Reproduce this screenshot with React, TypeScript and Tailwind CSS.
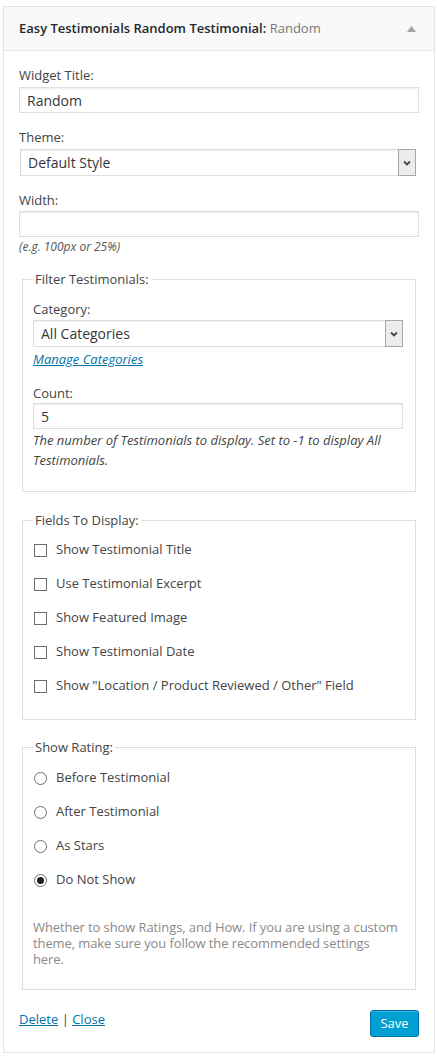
const font = { fontFamily: '"Open Sans", "Liberation Sans", sans-serif' };

function Select({ value }: { value: string }) {
  return (
    <div className="flex h-[27px] border border-[#dddddd] bg-white shadow-[inset_0_1px_2px_rgba(0,0,0,0.07)]">
      <div className="flex-1 flex items-center pl-[7px] text-[14px] text-[#32373c]">{value}</div>
      <div className="w-[18px] -my-px -mr-px flex items-center justify-center border border-[#a6a6a6] bg-[#ececec]">
        <svg width="8" height="6" viewBox="0 0 8 6">
          <path d="M1 1.5 L4 4.5 L7 1.5" fill="none" stroke="#444" strokeWidth="1.8" />
        </svg>
      </div>
    </div>
  );
}

function Input({ value }: { value?: string }) {
  return (
    <div className="h-[26px] flex items-center pl-[7px] border border-[#dddddd] bg-white shadow-[inset_0_1px_2px_rgba(0,0,0,0.07)] text-[14px] text-[#32373c]">
      {value}
    </div>
  );
}

function Label({ children }: { children: React.ReactNode }) {
  return <div className="text-[13px] leading-[18px] text-[#444]">{children}</div>;
}

function Checkbox({ label }: { label: string }) {
  return (
    <div className="h-[34px] flex items-center">
      <span className="w-[13px] h-[13px] border border-[#6d6d6d] bg-white" />
      <span className="ml-[9px] text-[13px] text-[#444]">{label}</span>
    </div>
  );
}

function Radio({ label, checked }: { label: string; checked?: boolean }) {
  return (
    <div className="h-[34px] flex items-center">
      <span className="w-[13px] h-[13px] rounded-full border border-[#6d6d6d] bg-white flex items-center justify-center">
        {checked && <span className="w-[7px] h-[7px] rounded-full bg-[#1e1e1e]" />}
      </span>
      <span className="ml-[9px] text-[13px] text-[#444]">{label}</span>
    </div>
  );
}

export default function App() {
  return (
    <div className="bg-white min-h-[1059px] pt-[6px] pl-[3px]" style={font}>
      <div className="w-[432px] border border-[#e5e5e5] bg-white">
        <div className="h-[44px] flex items-center justify-between pl-[15px] pr-[18px] bg-[#f9f9f9] border-b border-[#e5e5e5]">
          <div className="text-[13px] font-semibold text-[#23282d]">
            Easy Testimonials Random Testimonial:<span className="font-normal text-[#777]"> Random</span>
          </div>
          <svg width="9" height="6" viewBox="0 0 9 6">
            <path d="M0 6 L4.5 0 L9 6 Z" fill="#a0a5aa" />
          </svg>
        </div>

        <div className="px-[15px] pt-[15px] pb-[15px]">
          <Label>Widget Title:</Label>
          <div className="mt-[3px]">
            <Input value="Random" />
          </div>

          <div className="mt-[15px]">
            <Label>Theme:</Label>
          </div>
          <div className="mt-[3px] ml-[1px] mr-[3px]">
            <Select value="Default Style" />
          </div>

          <div className="mt-[15px]">
            <Label>Width:</Label>
          </div>
          <div className="mt-[2px]">
            <Input />
          </div>
          <div className="text-[12px] leading-[18px] italic text-[#555] mt-[1px]">(e.g. 100px or 25%)</div>

          <fieldset className="mt-[14px] mx-[3px] border border-[#dddddd] pl-[10px] pr-[12px] pb-[21px]">
            <legend className="px-[2px] text-[13px] leading-[18px] text-[#444]">Filter Testimonials:</legend>
            <div className="pt-[12px]">
              <Label>Category:</Label>
            </div>
            <div className="mt-[2px]">
              <Select value="All Categories" />
            </div>
            <div className="mt-[3px] text-[13px] leading-[18px] italic text-[#0073aa] underline">Manage Categories</div>
            <div className="mt-[16px]">
              <Label>Count:</Label>
            </div>
            <div className="mt-[1px]">
              <Input value="5" />
            </div>
            <div className="text-[13px] leading-[20px] italic text-[#444] mt-px">
              The number of Testimonials to display. Set to -1 to display All Testimonials.
            </div>
          </fieldset>

          <fieldset className="mt-[19px] mx-[3px] border border-[#dddddd] pl-[11px] pr-[12px] pb-[16px]">
            <legend className="ml-[-1px] px-[2px] text-[13px] leading-[18px] text-[#444]">Fields To Display:</legend>
            <div className="pt-[4px]">
              <Checkbox label="Show Testimonial Title" />
              <Checkbox label="Use Testimonial Excerpt" />
              <Checkbox label="Show Featured Image" />
              <Checkbox label="Show Testimonial Date" />
              <Checkbox label={'Show "Location / Product Reviewed / Other" Field'} />
            </div>
          </fieldset>

          <fieldset className="mt-[18px] mx-[3px] border border-[#dddddd] pl-[11px] pr-[3px] pb-[22px]">
            <legend className="ml-[-1px] px-[2px] text-[13px] leading-[18px] text-[#444]">Show Rating:</legend>
            <div className="pt-[5px]">
              <Radio label="Before Testimonial" />
              <Radio label="After Testimonial" />
              <Radio label="As Stars" />
              <Radio label="Do Not Show" checked />
            </div>
            <div className="mt-[22px] ml-[-1px] w-[367px] text-[13px] leading-[16px] tracking-[-0.1px] text-[#8a8a8a]">
              Whether to show Ratings, and How. If you are using a custom theme, make sure you follow the recommended settings here.
            </div>
          </fieldset>

          <div className="mt-[20px] flex items-start justify-between">
            <div className="text-[13px] leading-[18px] text-[#444]">
              <span className="text-[#0073aa] underline">Delete</span> | <span className="text-[#0073aa] underline">Close</span>
            </div>
            <button
              type="button"
              className="h-[27px] w-[49px] rounded-[3px] border border-[#0073aa] bg-[#00a0d2] text-[13px] text-white shadow-[inset_0_1px_0_rgba(120,200,230,0.5)]"
            >
              Save
            </button>
          </div>
        </div>
      </div>
    </div>
  );
}
